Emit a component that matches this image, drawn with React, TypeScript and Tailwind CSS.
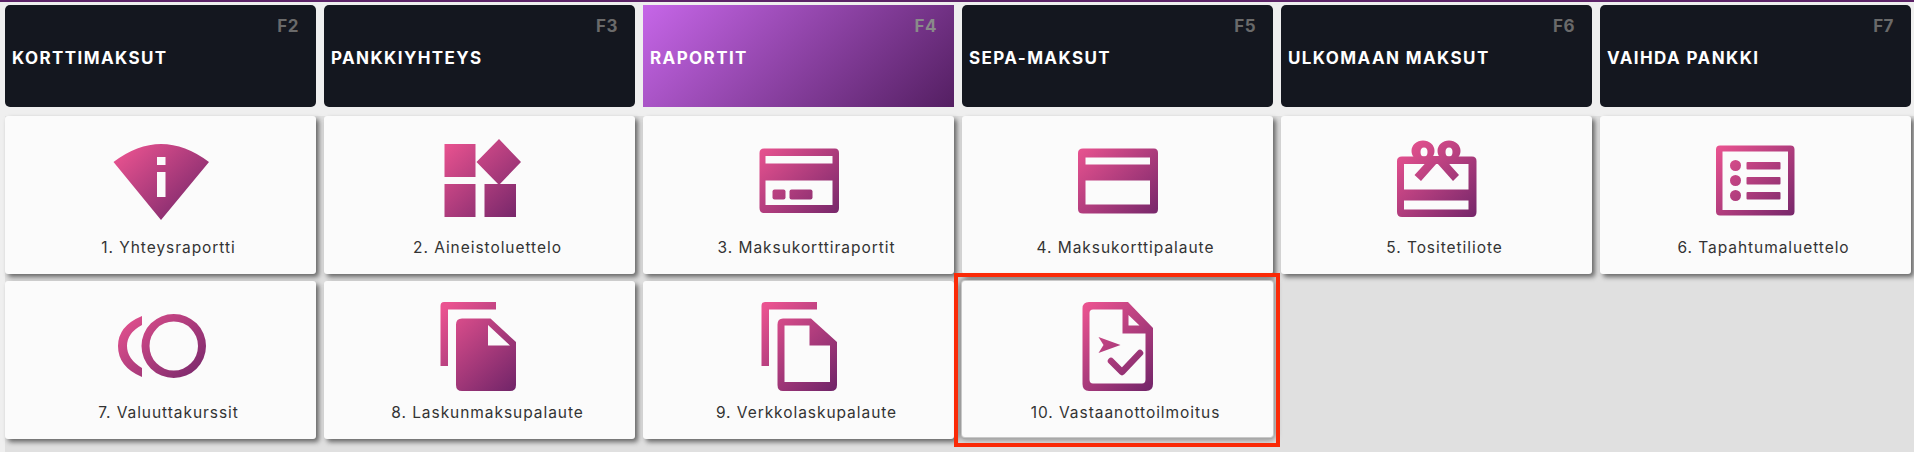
import type { ReactNode } from "react";

const tabs = [
  { key: "F2", title: "KORTTIMAKSUT" },
  { key: "F3", title: "PANKKIYHTEYS" },
  { key: "F4", title: "RAPORTIT", active: true },
  { key: "F5", title: "SEPA-MAKSUT" },
  { key: "F6", title: "ULKOMAAN MAKSUT" },
  { key: "F7", title: "VAIHDA PANKKI" },
];

// every icon is filled through the same diagonal pink to purple gradient
function Icon({ id, children }: { id: string; children: ReactNode }) {
  return (
    <svg width="120" height="92" viewBox="0 0 120 92" fill={`url(#${id})`} stroke="none" className="mt-[20px] shrink-0">
      <defs>
        <linearGradient id={id} gradientUnits="userSpaceOnUse" x1="22" y1="4" x2="100" y2="88">
          <stop offset="0.03" stopColor="#ea5390" />
          <stop offset="1" stopColor="#6f2468" />
        </linearGradient>
      </defs>
      {children}
    </svg>
  );
}

const cards: { label: string; selected?: boolean; icon: ReactNode }[] = [
  {
    label: "1. Yhteysraportti",
    icon: (
      <Icon id="g1">
        <path
          fillRule="evenodd"
          d="M12.5 26Q60 -10 108 26L60 84ZM56 21V29H64.5V21ZM56 36V61H64.5V36Z"
        />
      </Icon>
    ),
  },
  {
    label: "2. Aineistoluettelo",
    icon: (
      <Icon id="g2">
        <path d="M24.5 8H55.5V41H24.5ZM24.5 48H55.5V81H24.5ZM64.5 48H96V81H64.5ZM79 3L101 26L79 49L56.5 26Z" />
      </Icon>
    ),
  },
  {
    label: "3. Maksukorttiraportit",
    icon: (
      <Icon id="g3">
        <path
          fillRule="evenodd"
          d="M25 12.5H96Q100 12.5 100 17V72Q100 77 96 77H25Q20.5 77 20.5 72V17Q20.5 12.5 25 12.5ZM26.5 20V27.5H93.5V20ZM26.5 44.5V69H93.5V44.5Z"
        />
        <rect x="33.5" y="53.5" width="13" height="10" rx="2" />
        <rect x="50.5" y="53.5" width="23" height="10" rx="2" />
      </Icon>
    ),
  },
  {
    label: "4. Maksukorttipalaute",
    icon: (
      <Icon id="g4">
        <path
          fillRule="evenodd"
          d="M25 12.5H96Q100 12.5 100 17V73Q100 77.5 96 77.5H25Q20 77.5 20 73V17Q20 12.5 25 12.5ZM27.5 21.5V28.5H92V21.5ZM27.5 44.5V68.5H92V44.5Z"
        />
      </Icon>
    ),
  },
  {
    label: "5. Tositetiliote",
    icon: (
      <Icon id="g5">
        <path
          fillRule="evenodd"
          d="M25 20.5H95Q99.5 20.5 99.5 25V76Q99.5 81 95 81H25Q20 81 20 76V25Q20 20.5 25 20.5ZM27 28V53.5H91.5V28ZM27 64.5V73.5H91.5V64.5Z"
        />
        <path d="M55 20L37.5 39L44 45L60 27L76 45L82 39L65 20Z" />
        <path
          fillRule="evenodd"
          d="M34.5 15A11.5 10.5 0 1 1 57.5 15A11.5 10.5 0 1 1 34.5 15ZM43.5 16A3.5 4.5 0 1 0 50.5 16A3.5 4.5 0 1 0 43.5 16ZM60.5 15A11.5 10.5 0 1 1 83.5 15A11.5 10.5 0 1 1 60.5 15ZM68.5 16A3.5 4.5 0 1 0 75.5 16A3.5 4.5 0 1 0 68.5 16Z"
        />
      </Icon>
    ),
  },
  {
    label: "6. Tapahtumaluettelo",
    icon: (
      <Icon id="g6">
        <path
          fillRule="evenodd"
          d="M24 9.5H94.5Q98.5 9.5 98.5 13.5V75.5Q98.5 79.5 94.5 79.5H24Q20 79.5 20 75.5V13.5Q20 9.5 24 9.5ZM26.5 15.5V74H92V15.5Z"
        />
        <ellipse cx="39.5" cy="29.5" rx="5.5" ry="5.5" />
        <ellipse cx="39.5" cy="44.5" rx="5.5" ry="5.5" />
        <ellipse cx="39.5" cy="59.5" rx="5.5" ry="5.5" />
        <rect x="50.5" y="26" width="34" height="7.5" rx="1" />
        <rect x="50.5" y="41" width="34" height="7.5" rx="1" />
        <rect x="50.5" y="56" width="34" height="7.5" rx="1" />
      </Icon>
    ),
  },
  {
    label: "7. Valuuttakurssit",
    icon: (
      <Icon id="g7">
        <path
          fillRule="evenodd"
          d="M40.5 45A32.25 32 0 1 1 105 45A32.25 32 0 1 1 40.5 45ZM48.5 45A24.25 24.5 0 1 0 97 45A24.25 24.5 0 1 0 48.5 45Z"
        />
        <path d="M41 15V24Q26 32 26 45Q26 58 41 67V76Q17 66 17 45Q17 25 41 15Z" />
      </Icon>
    ),
  },
  {
    label: "8. Laskunmaksupalaute",
    icon: (
      <Icon id="g8">
        <path d="M24 1H76V8.5H28V65H20.5V5Q20.5 1 24 1Z" />
        <path
          fillRule="evenodd"
          d="M42 17.5H70.5L96 41V84Q96 90 90 90H42Q36 90 36 84V23.5Q36 17.5 42 17.5ZM68 24V44.5H90Z"
        />
      </Icon>
    ),
  },
  {
    label: "9. Verkkolaskupalaute",
    icon: (
      <Icon id="g9">
        <path d="M26 1H78V8.5H30V65H22.5V5Q22.5 1 26 1Z" />
        <path
          fillRule="evenodd"
          d="M44 17.5H72L98 41V84Q98 90 92 90H44Q38.5 90 38.5 84V23.5Q38.5 17.5 44 17.5ZM45.5 24.5V81H91V44.5H70.5V24.5Z"
        />
      </Icon>
    ),
  },
  {
    label: "10. Vastaanottoilmoitus",
    selected: true,
    icon: (
      <Icon id="g10">
        <path
          fillRule="evenodd"
          d="M31 1H70L95 27V83Q95 90 88 90H31Q24.5 90 24.5 83V7.5Q24.5 1 31 1ZM35 8.5Q31.5 8.5 31.5 12V78.5Q31.5 82.5 35 82.5H84Q87.5 82.5 87.5 78.5V32.5H64.5V8.5ZM70.5 14V24.5H81.5Z"
        />
        <path d="M40.5 36L62.5 44L40.5 52L45.5 44Z" />
        <path
          d="M53 60L64 71L82 52"
          fill="none"
          stroke="url(#g10)"
          strokeWidth="6.5"
          strokeLinecap="round"
          strokeLinejoin="round"
        />
      </Icon>
    ),
  },
];

export default function App() {
  return (
    <div className="h-[452px] overflow-hidden bg-[#efefef] font-['Inter',sans-serif]">
      <div className="h-[2px] bg-[#5c2367]" />
      <div className="h-[114px] pl-[5px] pt-[3px]">
        <div className="grid grid-cols-[repeat(6,311px)] gap-x-[8px]">
          {tabs.map((tab) => (
            <div
              key={tab.key}
              className={
                tab.active
                  ? "relative flex h-[102px] items-center bg-[linear-gradient(135deg,#c666e8,#541f62)] pl-[7px] pt-[5px]"
                  : "relative flex h-[102px] items-center rounded-[5px] bg-[#14171f] pl-[7px] pt-[5px]"
              }
            >
              <span
                className={
                  tab.active
                    ? "absolute right-[17px] top-[11px] text-[17px] font-bold leading-[20px] tracking-[0.5px] text-[#8a8a8a]"
                    : "absolute right-[17px] top-[11px] text-[17px] font-bold leading-[20px] tracking-[0.5px] text-[#6a6a6a]"
                }
              >
                {tab.key}
              </span>
              <span className="text-[17px] font-bold tracking-[1.4px] text-white">{tab.title}</span>
            </div>
          ))}
        </div>
      </div>
      <div className="ml-[5px] grid h-[336px] auto-rows-[158px] grid-cols-[repeat(6,311px)] gap-x-[8px] gap-y-[7px] bg-[#e0e0e0]">
        {cards.map((card) => (
          <div
            key={card.label}
            className={
              card.selected
                ? "relative flex h-[156px] flex-col items-center rounded-[3px] bg-[#fbfbfb] shadow-[0_0_0_1px_#c8c8c8,0_2px_0_#a8a8a8,0_0_6px_3px_rgba(0,0,0,0.4)]"
                : "flex flex-col items-center rounded-[3px] bg-[#fbfbfb] shadow-[3px_3px_5px_rgba(0,0,0,0.55)]"
            }
          >
            {card.icon}
            <span className="mt-[10px] pl-[16px] text-[15.5px] leading-[20px] tracking-[0.95px] text-[#333333]">
              {card.label}
            </span>
            {card.selected && (
              <div className="absolute bottom-[-10px] left-[-8px] right-[-7px] top-[-8px] border-[4px] border-[#fa2a07]" />
            )}
          </div>
        ))}
      </div>
    </div>
  );
}
